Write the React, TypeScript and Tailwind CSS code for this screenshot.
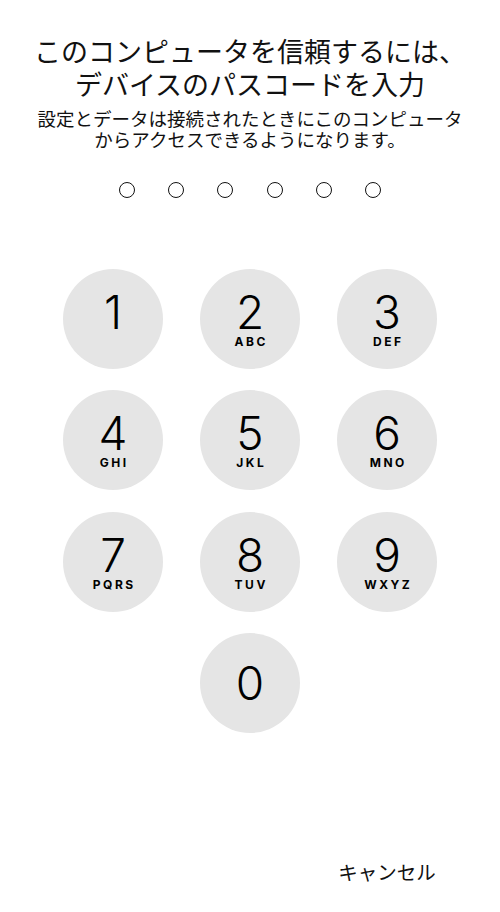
const KEYS: { digit: string; letters?: string }[] = [
  { digit: "1", letters: "" },
  { digit: "2", letters: "ABC" },
  { digit: "3", letters: "DEF" },
  { digit: "4", letters: "GHI" },
  { digit: "5", letters: "JKL" },
  { digit: "6", letters: "MNO" },
  { digit: "7", letters: "PQRS" },
  { digit: "8", letters: "TUV" },
  { digit: "9", letters: "WXYZ" },
];

const jp = { fontFamily: '"Noto Sans CJK JP", "Noto Sans", sans-serif' };
const num = { fontFamily: 'Inter, Roboto, "Liberation Sans", sans-serif' };

function Key({ digit, letters }: { digit: string; letters?: string }) {
  const hasLetters = letters !== undefined;
  return (
    <button
      className={`w-[100px] h-[100px] rounded-full bg-[#e5e5e5] flex flex-col items-center text-black ${
        hasLetters ? "pt-[20px]" : "justify-center"
      }`}
      style={num}
    >
      <span className="text-[46px] leading-[46px] font-light">{digit}</span>
      {hasLetters && (
        <span className="mt-[1px] h-[12px] text-[12px] leading-[12px] font-bold tracking-[2.5px] pl-[2.5px]">
          {letters}
        </span>
      )}
    </button>
  );
}

export default function App() {
  return (
    <div className="w-[500px] h-[912px] bg-white flex flex-col items-center text-[#111]" style={jp}>
      {/* Heading */}
      <h1 className="mt-[34px] text-[27px] leading-[33px] font-normal text-center">
        このコンピュータを信頼するには、
        <br />
        デバイスのパスコードを入力
      </h1>
      <p className="mt-[8px] text-[18.5px] leading-[20.5px] text-center">
        設定とデータは接続されたときにこのコンピュータ
        <br />
        からアクセスできるようになります。
      </p>

      {/* Passcode dots */}
      <div className="mt-[33px] flex gap-[33.4px]">
        {Array.from({ length: 6 }).map((_, i) => (
          <div key={i} className="w-[16px] h-[16px] rounded-full border-[1.6px] border-[#111]" />
        ))}
      </div>

      {/* Keypad */}
      <div className="mt-[71px] grid grid-cols-[100px_100px_100px] gap-x-[37px] gap-y-[21.3px]">
        {KEYS.map((k) => (
          <Key key={k.digit} digit={k.digit} letters={k.letters} />
        ))}
        <div />
        <Key digit="0" />
        <div />
      </div>

      {/* Cancel */}
      <div className="mt-[127px] grid grid-cols-[100px_100px_100px] gap-x-[37px]">
        <div />
        <div />
        <button className="text-[19.5px] leading-[24px] text-center whitespace-nowrap text-[#111]">
          キャンセル
        </button>
      </div>
    </div>
  );
}
